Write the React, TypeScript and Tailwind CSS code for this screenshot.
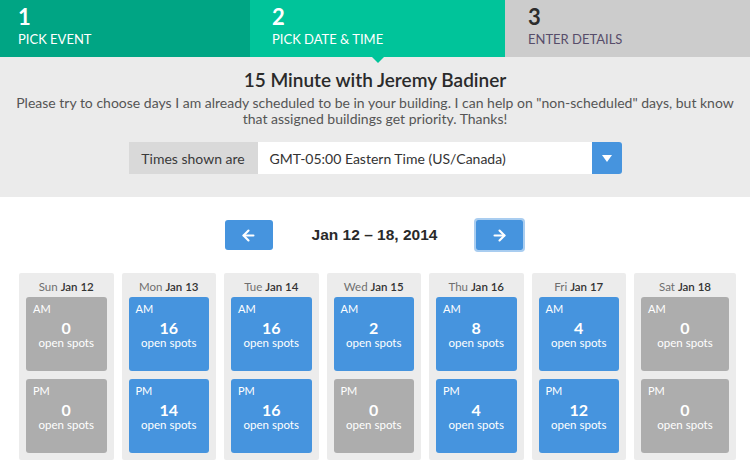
import React from 'react';
import { ArrowLeft, ArrowRight } from 'lucide-react';

type Slot = { label: string; count: number };
type Day = { dow: string; date: string; am: number; pm: number };

const DAYS: Day[] = [
  { dow: 'Sun', date: 'Jan 12', am: 0, pm: 0 },
  { dow: 'Mon', date: 'Jan 13', am: 16, pm: 14 },
  { dow: 'Tue', date: 'Jan 14', am: 16, pm: 16 },
  { dow: 'Wed', date: 'Jan 15', am: 2, pm: 0 },
  { dow: 'Thu', date: 'Jan 16', am: 8, pm: 4 },
  { dow: 'Fri', date: 'Jan 17', am: 4, pm: 12 },
  { dow: 'Sat', date: 'Jan 18', am: 0, pm: 0 },
];

const SlotCard: React.FC<Slot> = ({ label, count }) => (
  <div
    className={`h-[74px] rounded-[3px] px-[7px] pt-[5px] text-white ${
      count > 0 ? 'bg-[#4694de]' : 'bg-[#adadad]'
    }`}
  >
    <div className="text-[11px] leading-[14px]">{label}</div>
    <div className="text-center text-[16px] font-bold leading-[18px] mt-[3px]">{count}</div>
    <div className="text-center text-[11.5px] leading-[12px]">open spots</div>
  </div>
);

export default function App() {
  return (
    <div className="w-[750px] h-[471px] bg-white font-['Lato',sans-serif] overflow-hidden">
      {/* Steps */}
      <div className="flex h-[57px]">
        <div className="w-[250px] bg-[#00a584] text-white pl-[18px] pt-[4px]">
          <div className="text-[22px] font-bold leading-[26px]">1</div>
          <div className="text-[13px] leading-[16px] mt-[1px]">PICK EVENT</div>
        </div>
        <div className="relative w-[255px] bg-[#00c49a] text-white pl-[22px] pt-[4px]">
          <div className="text-[22px] font-bold leading-[26px]">2</div>
          <div className="text-[13px] leading-[16px] mt-[1px]">PICK DATE &amp; TIME</div>
          <div className="absolute left-[122px] top-[57px] w-0 h-0 border-l-[6px] border-r-[6px] border-t-[6px] border-l-transparent border-r-transparent border-t-[#00c49a]" />
        </div>
        <div className="flex-1 bg-[#cccccc] pl-[23px] pt-[4px]">
          <div className="text-[22px] font-bold leading-[26px] text-[#2c2c2c]">3</div>
          <div className="text-[13px] leading-[16px] mt-[1px] text-[#574d6a]">ENTER DETAILS</div>
        </div>
      </div>

      {/* Event info */}
      <div className="bg-[#ebebeb] h-[140px] pt-[11px] text-center">
        <h1 className="text-[19px] font-semibold leading-[24px] text-[#2a2a2a]">15 Minute with Jeremy Badiner</h1>
        <p className="mx-auto w-[730px] mt-[3px] text-[14px] leading-[16px] text-[#555555]">
          Please try to choose days I am already scheduled to be in your building. I can help on "non-scheduled" days, but know that assigned buildings get priority. Thanks!
        </p>
        <div className="flex justify-center mt-[15px]">
          <div className="w-[129px] h-[32px] bg-[#d9d9d9] flex items-center justify-center text-[14px] text-[#3a3a3a]">
            Times shown are
          </div>
          <div className="w-[334px] h-[32px] bg-white flex items-center pl-[12px] text-[14px] text-[#333333]">
            GMT-05:00 Eastern Time (US/Canada)
          </div>
          <div className="w-[30px] h-[32px] bg-[#4694de] rounded-r-[3px] flex items-center justify-center">
            <div className="w-0 h-0 border-l-[5px] border-r-[5px] border-t-[7px] border-l-transparent border-r-transparent border-t-white" />
          </div>
        </div>
      </div>

      {/* Week nav */}
      <div className="flex items-center justify-center h-[76px]">
        <button className="w-[48px] h-[30px] bg-[#4694de] rounded-[3px] flex items-center justify-center text-white">
          <ArrowLeft size={17} strokeWidth={3} />
        </button>
        <div className="ml-[39px] mr-[37px] font-['Liberation_Sans',sans-serif] font-bold text-[15.5px] text-[#2a2a2a]">
          Jan 12 – 18, 2014
        </div>
        <div className="rounded-[4px] border-2 border-[#a9cdf0]">
          <button className="w-[47px] h-[30px] bg-[#4694de] rounded-[2px] flex items-center justify-center text-white">
            <ArrowRight size={17} strokeWidth={3} />
          </button>
        </div>
      </div>

      {/* Days */}
      <div className="flex gap-[8px] pl-[19px] pr-[14px]">
        {DAYS.map((d, i) => (
          <div
            key={d.dow}
            className={`${i === DAYS.length - 1 ? 'flex-1' : 'w-[94.5px]'} bg-[#ececec] rounded-[2px] px-[7px] pb-[7px]`}
          >
            <div className="h-[24px] text-center text-[11.5px] leading-[28px]">
              <span className="text-[#6f6f6f]">{d.dow} </span>
              <span className="text-[#333333] font-semibold">{d.date}</span>
            </div>
            <div className="flex flex-col gap-[8px]">
              <SlotCard label="AM" count={d.am} />
              <SlotCard label="PM" count={d.pm} />
            </div>
          </div>
        ))}
      </div>
    </div>
  );
}
